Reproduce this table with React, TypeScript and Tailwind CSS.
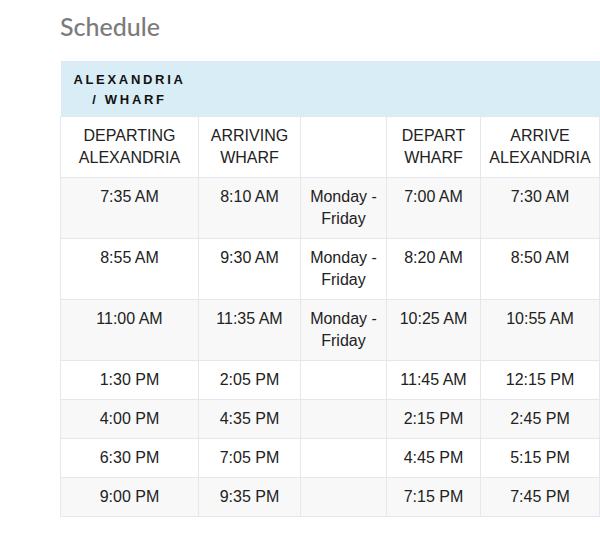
import React from 'react';

const ROWS = [
  ['7:35 AM', '8:10 AM', 'Monday - Friday', '7:00 AM', '7:30 AM'],
  ['8:55 AM', '9:30 AM', 'Monday - Friday', '8:20 AM', '8:50 AM'],
  ['11:00 AM', '11:35 AM', 'Monday - Friday', '10:25 AM', '10:55 AM'],
  ['1:30 PM', '2:05 PM', '', '11:45 AM', '12:15 PM'],
  ['4:00 PM', '4:35 PM', '', '2:15 PM', '2:45 PM'],
  ['6:30 PM', '7:05 PM', '', '4:45 PM', '5:15 PM'],
  ['9:00 PM', '9:35 PM', '', '7:15 PM', '7:45 PM'],
];

const HEADS = ['DEPARTING ALEXANDRIA', 'ARRIVING WHARF', '', 'DEPART WHARF', 'ARRIVE ALEXANDRIA'];

const cell = 'border border-[#e6e6ef] px-2 pt-2 pb-2 text-center align-top font-normal';

export default function App() {
  return (
    <main className="bg-white pl-[60px] pt-[10px] pb-[26px] font-['Liberation_Sans',Arial,sans-serif] text-[16px] leading-[22px] text-[#222]">
      <h2 className="font-['Lato',sans-serif] text-[25px] leading-[32px] font-medium text-[#7b7b7b] mb-[19px]">Schedule</h2>

      <table className="w-[539px] border-collapse table-fixed">
        <colgroup>
          <col className="w-[138px]" />
          <col className="w-[102px]" />
          <col className="w-[86px]" />
          <col className="w-[94px]" />
          <col className="w-[119px]" />
        </colgroup>
        <thead>
          <tr className="bg-[#d9edf7] border-b border-[#e6e6ef]">
            <th className="px-[12px] pt-[9px] pb-[6px] text-center align-top text-[13px] leading-[20px] font-bold tracking-[2.7px] text-[#111]">
              ALEXANDRIA / WHARF
            </th>
            <td colSpan={4}></td>
          </tr>
          <tr className="bg-white">
            {HEADS.map((h, i) => (
              <th key={i} className={cell}>{h}</th>
            ))}
          </tr>
        </thead>
        <tbody>
          {ROWS.map((r, i) => (
            <tr key={i} className={i % 2 === 0 ? 'bg-[#f8f8f8]' : 'bg-white'}>
              {r.map((c, j) => (
                <td key={j} className={cell}>{c}</td>
              ))}
            </tr>
          ))}
        </tbody>
      </table>
    </main>
  );
}
